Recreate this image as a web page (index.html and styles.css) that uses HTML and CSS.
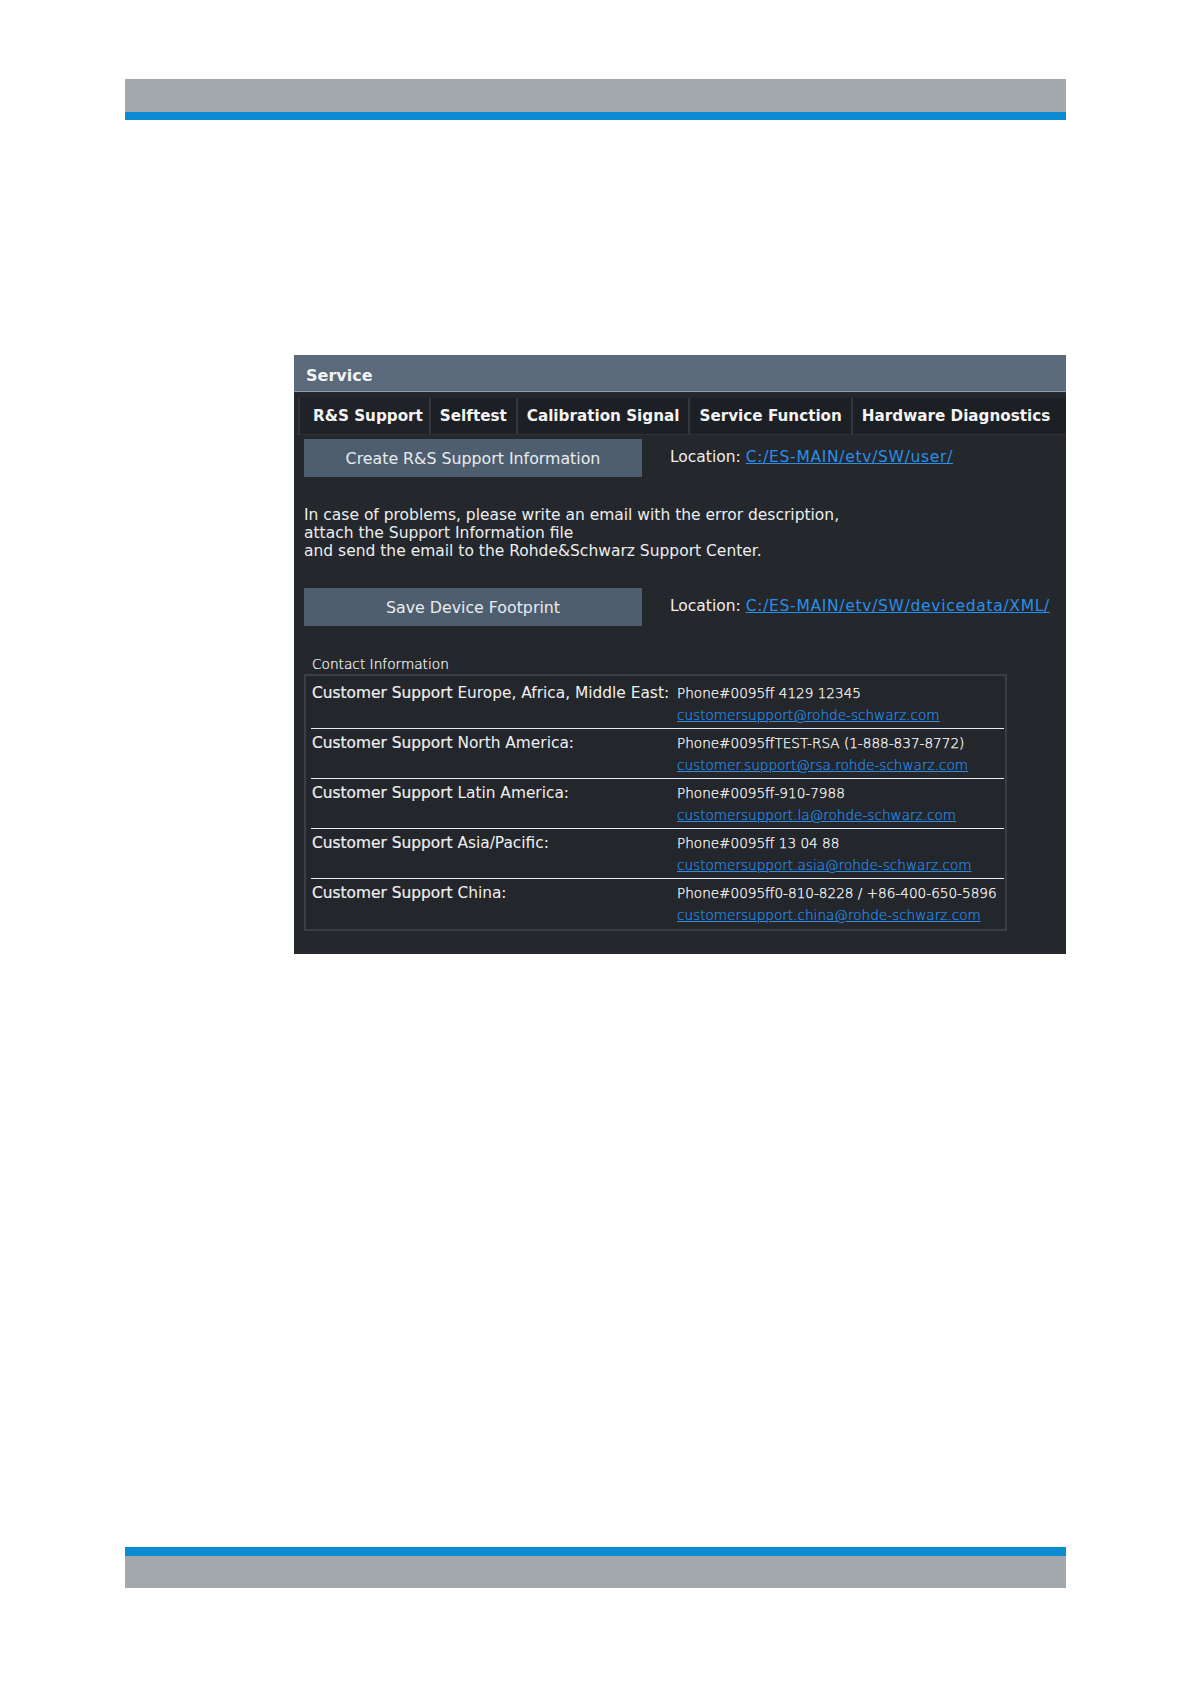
FILE: index.html
```html
<!DOCTYPE html>
<html lang="en">
<head>
    <meta charset="UTF-8">
    <title>Service</title>
    <link rel="stylesheet" href="styles.css">
</head>
<body>
    <div class="topbar"></div>

    <div class="panel">
        <div class="title">Service</div>
        <ul class="tabs">
            <li class="active">R&amp;S Support</li>
            <li>Selftest</li>
            <li>Calibration Signal</li>
            <li>Service Function</li>
            <li class="last">Hardware Diagnostics</li>
        </ul>
        <div class="body">
            <div class="action">
                <div class="btn">Create R&amp;S Support Information</div>
                <div class="loc">Location: <a href="#">C:/ES-MAIN/etv/SW/user/</a></div>
            </div>
            <p class="note">In case of problems, please write an email with the error description,<br>
                attach the Support Information file<br>
                and send the email to the Rohde&amp;Schwarz Support Center.</p>
            <div class="action">
                <div class="btn">Save Device Footprint</div>
                <div class="loc">Location: <a href="#">C:/ES-MAIN/etv/SW/devicedata/XML/</a></div>
            </div>

            <div class="contact-label">Contact Information</div>
            <div class="contact">
                <div class="row">
                    <div class="who"><b>Customer Support</b> Europe, Africa, Middle East:</div>
                    <div class="info">Phone#0095ff 4129 12345<br><a href="#">customersupport@rohde-schwarz.com</a></div>
                </div>
                <div class="row">
                    <div class="who"><b>Customer Support</b> North America:</div>
                    <div class="info">Phone#0095ffTEST-RSA (1-888-837-8772)<br><a href="#">customer.support@rsa.rohde-schwarz.com</a></div>
                </div>
                <div class="row">
                    <div class="who"><b>Customer Support</b> Latin America:</div>
                    <div class="info">Phone#0095ff-910-7988<br><a href="#">customersupport.la@rohde-schwarz.com</a></div>
                </div>
                <div class="row">
                    <div class="who"><b>Customer Support</b> Asia/Pacific:</div>
                    <div class="info">Phone#0095ff 13 04 88<br><a href="#">customersupport.asia@rohde-schwarz.com</a></div>
                </div>
                <div class="row last">
                    <div class="who"><b>Customer Support</b> China:</div>
                    <div class="info">Phone#0095ff0-810-8228 / +86-400-650-5896<br><a href="#">customersupport.china@rohde-schwarz.com</a></div>
                </div>
            </div>
        </div>
    </div>

    <div class="bottombar"></div>
</body>
</html>
```

FILE: styles.css
```css
*{
    margin: 0;
    padding: 0;
}
body{
    width: 1191px;
    height: 1684px;
    background: #fff;
    font-family: "DejaVu Sans", Verdana, sans-serif;
}
.topbar{
    margin: 79px 0 0 125px;
    width: 941px;
    height: 33px;
    background: #a2a9ae;
    border-bottom: 8px solid #0b8bd2;
}
.bottombar{
    margin: 593px 0 0 125px;
    width: 941px;
    height: 32px;
    background: #a2a9ae;
    border-top: 9px solid #0b8bd2;
}
.panel{
    margin: 235px 0 0 294px;
    width: 772px;
    height: 599px;
    background: #24272c;
    color: #eceef0;
}
.title{
    height: 36px;
    line-height: 41px;
    padding-left: 12px;
    background: #5b6a7a;
    border-bottom: 1px solid #93a0ab;
    font-size: 16px;
    font-weight: bold;
    color: #f2f4f5;
}
.tabs{
    display: flex;
    margin-top: 6px;
    height: 36px;
    background: #1c1f23;
    border-bottom: 1px solid #2e3238;
    list-style: none;
    border-left: 4px solid #24272c;
}
.tabs li{
    padding: 0 9px;
    line-height: 37px;
    font-size: 15.2px;
    font-weight: bold;
    color: #f4f4f4;
    border-left: 2px solid #33373d;
    white-space: nowrap;
}
.tabs li.active{
    padding: 0 6px 0 13px;
    border-left-color: #30343a;
    background: #1f2226;
}
.tabs li.last{
    flex: 1;
}
.body{
    padding: 4px 0 0 10px;
}
.action{
    display: flex;
    align-items: center;
}
.btn{
    width: 338px;
    height: 38px;
    line-height: 40px;
    text-align: center;
    background: #4f5e6f;
    color: #e8ecef;
    font-size: 15.8px;
}
.loc{
    margin-left: 28px;
    font-size: 15.5px;
    color: #f0f0f0;
    margin-top: -2px;
}
.loc a{
    color: #2a8fe8;
    letter-spacing: 0.7px;
}
.note{
    margin: 29px 0 28px;
    font-size: 15.5px;
    line-height: 18px;
    color: #eceef0;
}
.contact-label{
    margin: 28px 0 0 8px;
    font-size: 13.7px;
    font-weight: 200;
    line-height: 20px;
    color: #fff;
    -webkit-text-stroke: 0.2px #fff;
}
.contact{
    width: 703px;
    height: 257px;
    margin-top: 0;
    border: 2px solid #3a3e45;
    background: #23262b;
    padding: 5px 0 0 5px;
    box-sizing: border-box;
}
.row{
    display: flex;
    width: 692px;
    border-bottom: 1px solid #e9ebec;
    padding: 1px 0 2px 1px;
    margin-bottom: 2px;
    line-height: 22px;
    font-size: 15.4px;
}
.row.last{
    border-bottom: none;
}
.who{
    width: 365px;
    flex-shrink: 0;
    color: #f0f0f0;
}
.who b{
    font-weight: normal;
    -webkit-text-stroke: 0.2px #f0f0f0;
}
.info{
    font-size: 13.6px;
    font-weight: 200;
    color: #fff;
    white-space: nowrap;
    -webkit-text-stroke: 0.25px #fff;
}
.info a{
    color: #2a8fe8;
    -webkit-text-stroke: 0.2px #2a8fe8;
}
```
